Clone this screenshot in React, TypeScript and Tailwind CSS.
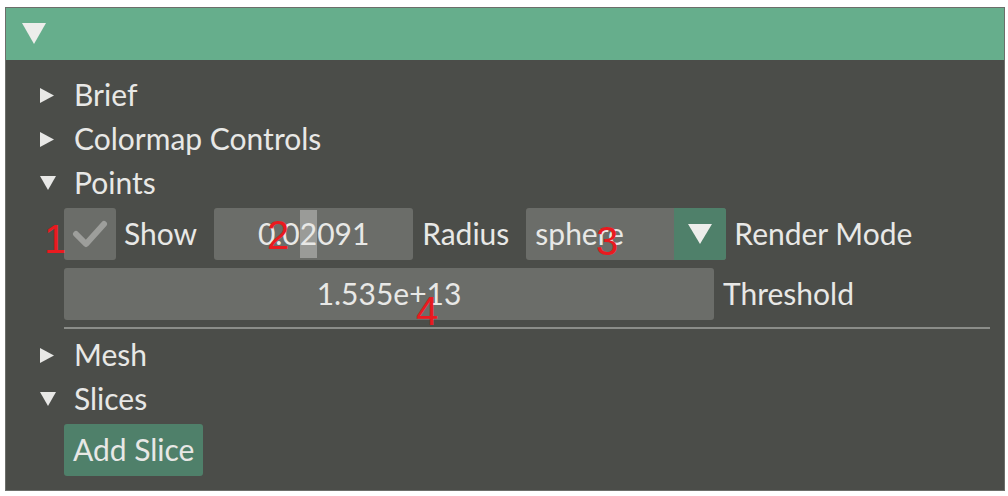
import React from 'react';

const font = { fontFamily: 'Lato, "Noto Sans", sans-serif' };

const ArrowRight = () => (
  <svg width="14" height="15" viewBox="0 0 14 15" className="shrink-0">
    <polygon points="0,0 14,7.5 0,15" fill="#e8e8e6" />
  </svg>
);

const ArrowDown = () => (
  <svg width="16" height="14" viewBox="0 0 16 14" className="shrink-0">
    <polygon points="0,0 16,0 8,14" fill="#e8e8e6" />
  </svg>
);

const TreeNode: React.FC<{ label: string; open?: boolean }> = ({ label, open }) => (
  <div className="h-[44px] flex items-center pl-[34px]">
    <div className="w-[34px] flex items-center">{open ? <ArrowDown /> : <ArrowRight />}</div>
    <span className="text-[30px] text-[#e8e8e6] leading-none pb-[2px]">{label}</span>
  </div>
);

const Mark: React.FC<{ n: string; className: string }> = ({ n, className }) => (
  <span
    className={`absolute text-[40px] leading-none text-[#ea1a1f] ${className}`}
    style={{ fontFamily: '"Liberation Sans", Arial, sans-serif' }}
  >
    {n}
  </span>
);

export default function App() {
  return (
    <div className="w-[1008px] h-[496px] bg-white pt-[8px] pl-[6px]" style={font}>
      <div className="relative w-[998px] h-[482px] bg-[#4b4d49] flex flex-col shadow-[0_0_0_1px_#6c6e6a]">
        <div className="h-[52px] bg-[#66ae8c] flex items-center pl-[16px] shrink-0">
          <svg width="24" height="22" viewBox="0 0 24 22">
            <polygon points="0,0 24,0 12,21" fill="#ededeb" />
          </svg>
        </div>

        <div className="pt-[13px] flex flex-col">
          <TreeNode label="Brief" />
          <TreeNode label="Colormap Controls" />
          <TreeNode label="Points" open />

          <div className="mt-[3px] pl-[58px] flex items-center h-[52px] text-[30px] text-[#e8e8e6]">
            <div className="w-[52px] h-[52px] rounded-[3px] bg-[#6b6d69] flex items-center justify-center">
              <svg width="36" height="30" viewBox="0 0 36 30">
                <polyline
                  points="4,15 14,25 32,5"
                  fill="none"
                  stroke="#9d9e9b"
                  strokeWidth="6"
                  strokeLinecap="round"
                  strokeLinejoin="round"
                />
              </svg>
            </div>
            <span className="ml-[8px] leading-none pb-[2px]">Show</span>
            <div className="ml-[17px] w-[199px] h-[52px] rounded-[3px] bg-[#6b6d69] flex items-center justify-center leading-none">
              <span className="pb-[2px]">0.0</span>
              <span className="bg-[#9a9b98] h-[48px] flex items-center pb-[2px]">2</span>
              <span className="pb-[2px]">091</span>
            </div>
            <span className="ml-[9px] leading-none pb-[2px]">Radius</span>
            <div className="ml-[17px] w-[200px] h-[52px] rounded-[3px] bg-[#6b6d69] flex items-center overflow-hidden">
              <span className="flex-1 pl-[9px] leading-none pb-[2px]">sphere</span>
              <div className="w-[52px] h-[52px] bg-[#4f806a] flex items-center justify-center">
                <svg width="24" height="21" viewBox="0 0 24 21">
                  <polygon points="0,0 24,0 12,20" fill="#ededeb" />
                </svg>
              </div>
            </div>
            <span className="ml-[8px] leading-none pb-[2px]">Render Mode</span>
          </div>

          <div className="mt-[8px] pl-[58px] flex items-center h-[52px] text-[30px] text-[#e8e8e6]">
            <div className="w-[650px] h-[52px] rounded-[3px] bg-[#6b6d69] flex items-center justify-center leading-none">
              <span className="pb-[2px]">1.535e+13</span>
            </div>
            <span className="ml-[9px] leading-none pb-[2px]">Threshold</span>
          </div>

          <div className="mt-[7px] ml-[58px] mr-[14px] h-[2px] bg-[#8b8d89]" />

          <div className="mt-[4px]">
            <TreeNode label="Mesh" />
            <TreeNode label="Slices" open />
          </div>

          <div className="mt-[3px] pl-[58px]">
            <button className="h-[52px] px-[9px] pb-[2px] rounded-[3px] bg-[#4f806a] text-[30px] text-[#e8e8e6] leading-none">
              Add Slice
            </button>
          </div>
        </div>

        <Mark n="1" className="left-[38px] top-[211px]" />
        <Mark n="2" className="left-[261px] top-[207px]" />
        <Mark n="3" className="left-[590px] top-[213px]" />
        <Mark n="4" className="left-[410px] top-[283px]" />
      </div>
    </div>
  );
}
